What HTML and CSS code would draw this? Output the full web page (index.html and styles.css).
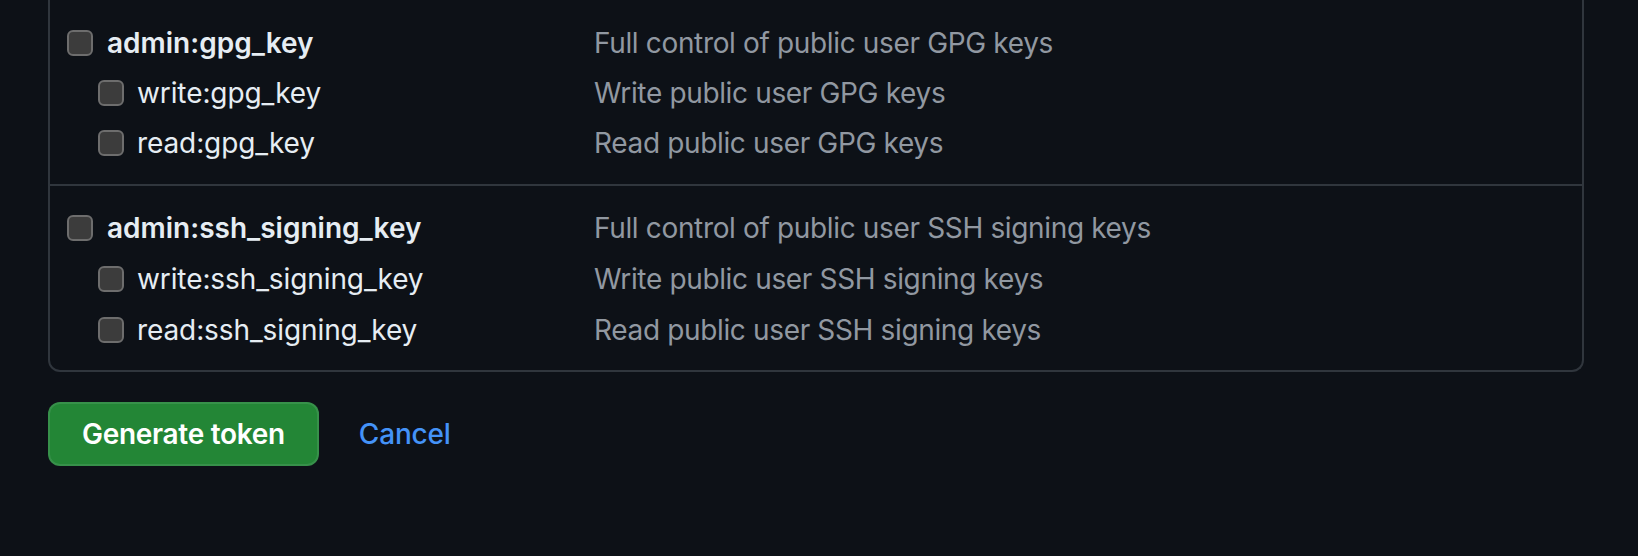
FILE: index.html
```html
<!DOCTYPE html>
<html lang="en">
<head>
<meta charset="utf-8">
<title>Scopes</title>
<link rel="stylesheet" href="styles.css">
</head>
<body>
<main class="page">
  <div class="scopes">
    <section class="group group-first">
      <div class="row">
        <label class="label main"><input type="checkbox" class="cb"><span>admin:gpg_key</span></label>
        <span class="desc">Full control of public user GPG keys</span>
      </div>
      <div class="row">
        <label class="label sub"><input type="checkbox" class="cb"><span>write:gpg_key</span></label>
        <span class="desc">Write public user GPG keys</span>
      </div>
      <div class="row">
        <label class="label sub"><input type="checkbox" class="cb"><span>read:gpg_key</span></label>
        <span class="desc">Read public user GPG keys</span>
      </div>
    </section>
    <section class="group group-second">
      <div class="row">
        <label class="label main"><input type="checkbox" class="cb"><span>admin:ssh_signing_key</span></label>
        <span class="desc">Full control of public user SSH signing keys</span>
      </div>
      <div class="row">
        <label class="label sub"><input type="checkbox" class="cb"><span>write:ssh_signing_key</span></label>
        <span class="desc">Write public user SSH signing keys</span>
      </div>
      <div class="row">
        <label class="label sub"><input type="checkbox" class="cb"><span>read:ssh_signing_key</span></label>
        <span class="desc">Read public user SSH signing keys</span>
      </div>
    </section>
  </div>
  <div class="actions">
    <button class="btn-primary" type="button">Generate token</button>
    <a class="cancel" href="#">Cancel</a>
  </div>
</main>
</body>
</html>
```

FILE: styles.css
```css
html, body {
  margin: 0;
  padding: 0;
  background: #0d1117;
}
body {
  font-family: Inter, "Noto Sans", "Liberation Sans", sans-serif;
  font-size: 28px;
  color: #e6edf3;
  width: 1638px;
  height: 556px;
  overflow: hidden;
}
.page {
  padding: 0 55px 0 48px;
}
.scopes {
  border: 2px solid #30363d;
  border-top: 0;
  border-radius: 0 0 12px 12px;
  width: 1536px;
  box-sizing: border-box;
}
.group {
  padding: 16px 0 16px 17px;
}
.group-first {
  padding-top: 18px;
}
.group-second {
  padding-bottom: 15px;
}
.group + .group {
  border-top: 2px solid #30363d;
}
.row {
  display: grid;
  grid-template-columns: 527px 1fr;
  align-items: center;
  height: 50px;
}
.group-second .row {
  height: 51px;
}
.label {
  display: flex;
  align-items: center;
  gap: 14px;
  white-space: nowrap;
}
.label.main {
  font-weight: 600;
}
.label.sub {
  padding-left: 31px;
  gap: 13px;
  font-weight: 400;
  letter-spacing: -0.1px;
}
.cb {
  appearance: none;
  -webkit-appearance: none;
  margin: 0;
  width: 26px;
  height: 26px;
  box-sizing: border-box;
  background: #3c3c3c;
  border: 2px solid #6d6d6d;
  border-radius: 6px;
  flex: none;
}
.desc {
  color: #9198a1;
  white-space: nowrap;
  letter-spacing: -0.35px;
}
.actions {
  display: flex;
  align-items: center;
  gap: 40px;
  margin-top: 30px;
}
.btn-primary {
  font: inherit;
  font-weight: 600;
  color: #ffffff;
  background: #238636;
  border: 2px solid rgba(240, 246, 252, 0.1);
  border-radius: 12px;
  height: 64px;
  padding: 0 32px;
  white-space: nowrap;
  letter-spacing: -0.3px;
}
.cancel {
  color: #4493f8;
  text-decoration: none;
  font-weight: 500;
  letter-spacing: -0.2px;
}
```
